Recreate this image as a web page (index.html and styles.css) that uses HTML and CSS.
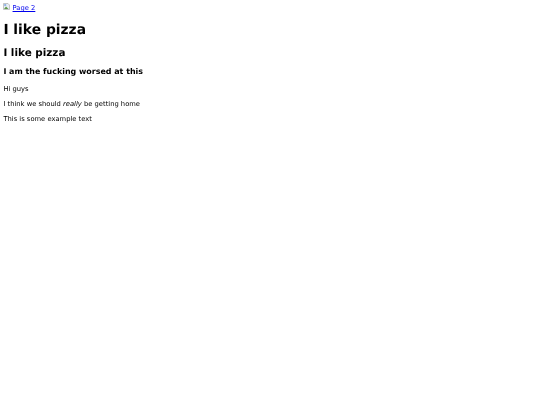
FILE: index.html
```html
<!DOCTYPE html>
<html>
<head>
<meta charset="utf-8">
<title>Pizza</title>
<link rel="stylesheet" href="styles.css">
</head>
<body>
<div class="page">
<nav class="nav">
<svg class="broken" width="7" height="7" viewBox="0 0 7 7"><path d="M0.5 0.5H5L6.5 2V6.5H0.5Z" fill="#e8eef6" stroke="#b0b0b0" stroke-width="0.7"/><path d="M1 6L3 3.5L5.5 6Z" fill="#5f9a4a"/><rect x="1.2" y="1.2" width="2" height="1.6" fill="#7fa8e0"/></svg>
<a href="#">Page 2</a>
</nav>
<h1>I like pizza</h1>
<h2>I like pizza</h2>
<h3>I am the fucking worsed at this</h3>
<p>Hi guys</p>
<p>I think we should <em>really</em> be getting home</p>
<p>This is some example text</p>
</div>
</body>
</html>
```
FILE: styles.css
```css
body {
  margin: 3.4px;
  background: #fff;
}
.page {
  font-family: "DejaVu Sans", sans-serif;
  font-size: 6.75px;
  line-height: 1.215;
  color: #000;
  text-rendering: geometricPrecision;
  filter: blur(0.25px);
}
a { color: #0000ee; }
.broken { vertical-align: baseline; }
h1 { font-size: 13.85px; margin: 9px 0 8.3px; }
h2 { font-size: 10.4px; margin: 8.6px 0 7.6px; }
h3 { font-size: 7.95px; margin: 0 0 7.9px; }
p { margin: 6.75px 0; }
```
